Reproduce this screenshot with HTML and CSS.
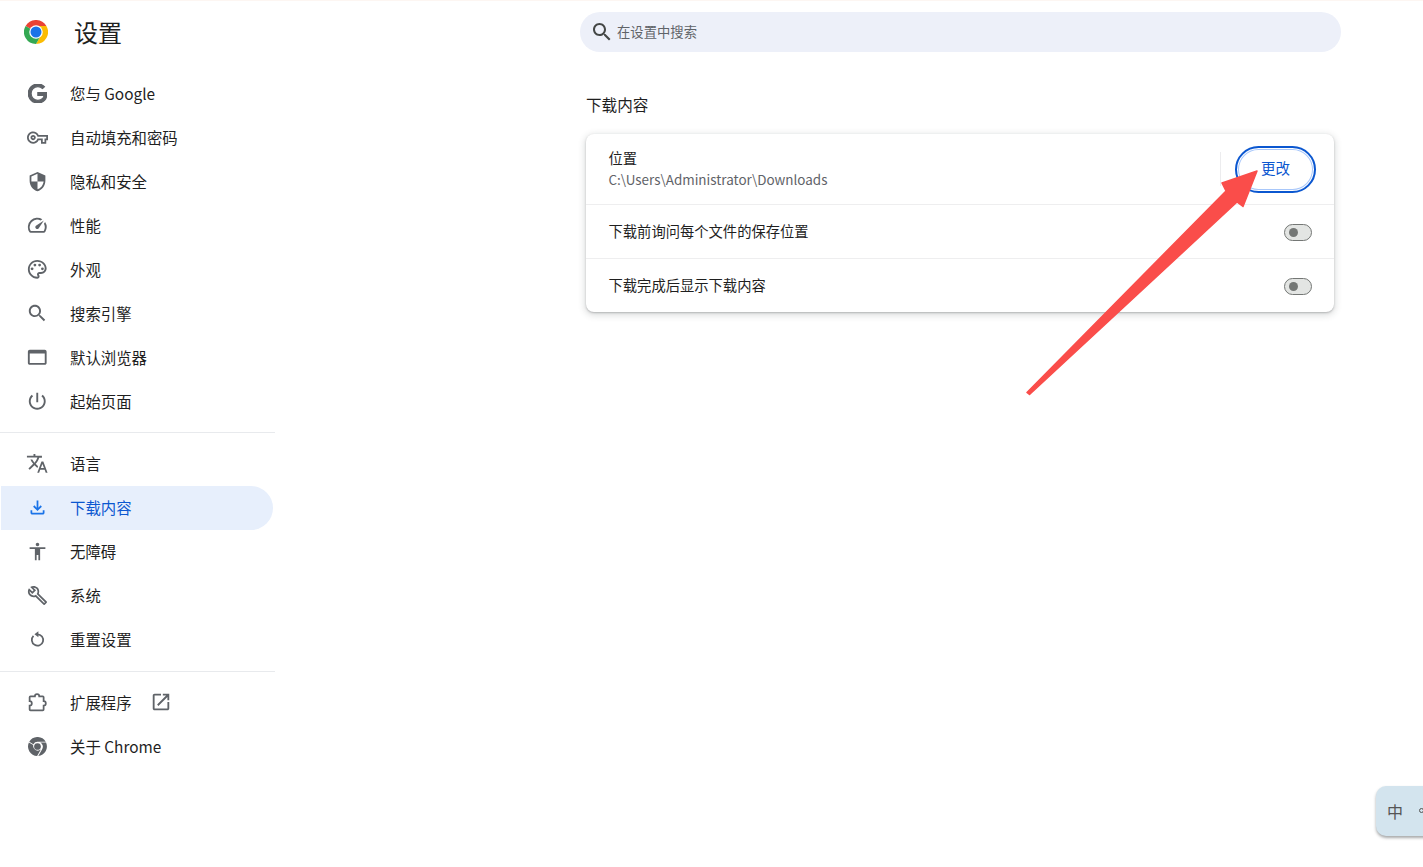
FILE: index.html
```html
<!DOCTYPE html>
<html lang="zh-CN">
<head>
<meta charset="utf-8">
<title>设置 - 下载内容</title>
<link rel="stylesheet" href="styles.css">
</head>
<body>
<div class="page">
  <aside class="sidebar">
    <header class="brand">
      <svg class="logo" viewBox="0 0 48 48">
        <path fill="#ea4335" d="M3.2 12A24 24 0 0 1 44.8 12H24A12 12 0 0 0 13.6 18Z"/>
        <path fill="#fbbc04" d="M44.8 12A24 24 0 0 1 24 48L34.4 30A12 12 0 0 0 24 12Z"/>
        <path fill="#34a853" d="M3.2 12A24 24 0 0 0 24 48L34.4 30A12 12 0 0 1 13.6 18Z"/>
        <circle cx="24" cy="24" r="13.500" fill="#fff"/>
        <circle cx="24" cy="24" r="11" fill="#1a73e8"/>
      </svg>
      <h1 class="brand-title">设置</h1>
    </header>
    <nav class="nav">
      <a class="nav-item"><span class="nav-icon"><svg class="icon icon-g icon-bold" viewBox="0 0 24 24"><path d="M12.48 10.92v3.28h7.84c-.24 1.84-.853 3.187-1.787 4.133-1.147 1.147-2.933 2.4-6.053 2.4-4.827 0-8.6-3.893-8.6-8.72s3.773-8.72 8.6-8.72c2.6 0 4.507 1.027 5.907 2.347l2.307-2.307C18.747 1.44 16.133 0 12.48 0 5.867 0 .307 5.387.307 12s5.56 12 12.173 12c3.573 0 6.267-1.173 8.373-3.36 2.16-2.16 2.84-5.213 2.84-7.667 0-.76-.053-1.467-.173-2.053H12.48z"/></svg></span>您与 Google</a>
      <a class="nav-item"><span class="nav-icon"><svg class="icon" viewBox="0 0 24 24"><path d="M22 19h-6v-4h-2.68c-1.14 2.42-3.6 4-6.32 4-3.86 0-7-3.14-7-7s3.14-7 7-7c2.72 0 5.17 1.58 6.32 4H24v6h-2v4zm-4-2h2v-4h2v-2H11.94l-.23-.67C11.01 8.34 9.11 7 7 7c-2.76 0-5 2.24-5 5s2.24 5 5 5c2.11 0 4.01-1.34 4.71-3.33l.23-.67H18v4zM7 15c-1.65 0-3-1.35-3-3s1.35-3 3-3 3 1.35 3 3-1.35 3-3 3zm0-4c-.55 0-1 .45-1 1s.45 1 1 1 1-.45 1-1-.45-1-1-1z"/></svg></span>自动填充和密码</a>
      <a class="nav-item"><span class="nav-icon"><svg class="icon" viewBox="0 0 24 24"><path d="M12 1L3 5v6c0 5.55 3.84 10.74 9 12 5.16-1.26 9-6.45 9-12V5l-9-4zm0 10.99h7c-.53 4.12-3.28 7.79-7 8.94V12H5V6.3l7-3.11v8.8z"/></svg></span>隐私和安全</a>
      <a class="nav-item"><span class="nav-icon"><svg class="icon icon-lg" viewBox="0 0 24 24"><path d="M20.38 8.57l-1.23 1.85a8 8 0 0 1-.22 7.58H5.07A8 8 0 0 1 15.58 6.85l1.85-1.23A10 10 0 0 0 3.35 19a2 2 0 0 0 1.72 1h13.85a2 2 0 0 0 1.74-1 10 10 0 0 0-.27-10.44zm-9.79 6.84a2 2 0 0 0 2.83 0l5.66-8.49-8.49 5.66a2 2 0 0 0 0 2.83z"/></svg></span>性能</a>
      <a class="nav-item"><span class="nav-icon"><svg class="icon icon-lg" viewBox="0 0 24 24"><path d="M12 22C6.49 22 2 17.51 2 12S6.49 2 12 2s10 4.04 10 9c0 3.31-2.69 6-6 6h-1.77c-.28 0-.5.22-.5.5 0 .12.05.23.13.33.41.47.64 1.06.64 1.67 0 1.38-1.12 2.5-2.5 2.5zm0-18c-4.41 0-8 3.59-8 8s3.59 8 8 8c.28 0 .5-.22.5-.5 0-.16-.08-.28-.14-.35-.41-.46-.63-1.05-.63-1.65 0-1.38 1.12-2.5 2.5-2.5H16c2.21 0 4-1.79 4-4 0-3.86-3.59-7-8-7z"/><circle cx="6.5" cy="11.5" r="1.5"/><circle cx="9.5" cy="7.5" r="1.5"/><circle cx="14.5" cy="7.5" r="1.5"/><circle cx="17.5" cy="11.5" r="1.5"/></svg></span>外观</a>
      <a class="nav-item"><span class="nav-icon"><svg class="icon icon-lg" viewBox="0 0 24 24"><path d="M15.5 14h-.79l-.28-.27C15.41 12.59 16 11.11 16 9.5 16 5.91 13.09 3 9.5 3S3 5.91 3 9.5 5.91 16 9.5 16c1.61 0 3.09-.59 4.23-1.57l.27.28v.79l5 4.99L20.49 19l-4.99-5zm-6 0C7.01 14 5 11.99 5 9.5S7.01 5 9.5 5 14 7.01 14 9.5 11.99 14 9.5 14z"/></svg></span>搜索引擎</a>
      <a class="nav-item"><span class="nav-icon"><svg class="icon icon-lg" viewBox="0 0 24 24"><path d="M20 4H4c-1.1 0-2 .9-2 2v12c0 1.1.9 2 2 2h16c1.1 0 2-.9 2-2V6c0-1.1-.9-2-2-2zm0 14H4V8h16v10z"/></svg></span>默认浏览器</a>
      <a class="nav-item"><span class="nav-icon"><svg class="icon icon-lg" viewBox="0 0 24 24"><path d="M13 3h-2v10h2V3zm4.83 2.17l-1.42 1.42C17.99 7.86 19 9.81 19 12c0 3.87-3.13 7-7 7s-7-3.13-7-7c0-2.19 1.01-4.14 2.58-5.42L6.17 5.17C4.23 6.82 3 9.26 3 12c0 4.97 4.03 9 9 9s9-4.03 9-9c0-2.74-1.23-5.18-3.17-6.83z"/></svg></span>起始页面</a>
    </nav>
    <hr class="divider">
    <nav class="nav">
      <a class="nav-item"><span class="nav-icon"><svg class="icon icon-lg" viewBox="0 0 24 24"><path d="M12.87 15.07l-2.54-2.51.03-.03c1.74-1.94 2.98-4.17 3.71-6.53H17V4h-7V2H8v2H1v1.99h11.17C11.5 7.92 10.44 9.75 9 11.35 8.07 10.32 7.3 9.19 6.69 8h-2c.73 1.63 1.73 3.17 2.98 4.56l-5.09 5.02L4 19l5-5 3.11 3.11.76-2.04zM18.5 10h-2L12 22h2l1.12-3h4.75L21 22h2l-4.5-12zm-2.62 7l1.62-4.33L19.12 17h-3.24z"/></svg></span>语言</a>
      <a class="nav-item nav-item-active"><span class="nav-icon"><svg class="icon" viewBox="0 0 24 24"><path d="M12 16l-5-5 1.4-1.45 2.6 2.6V4h2v8.15l2.6-2.6L17 11zm-6 4q-.825 0-1.413-.588Q4 18.825 4 18v-3h2v3h12v-3h2v3q0 .825-.587 1.412Q18.825 20 18 20z"/></svg></span>下载内容</a>
      <a class="nav-item"><span class="nav-icon"><svg class="icon" viewBox="0 0 24 24"><path d="M12 2c1.1 0 2 .9 2 2s-.9 2-2 2-2-.9-2-2 .9-2 2-2zm9 7h-6v13h-2v-6h-2v6H9V9H3V7h18v2z"/></svg></span>无障碍</a>
      <a class="nav-item"><span class="nav-icon"><svg class="icon" viewBox="0 0 24 24"><path d="M22.61 18.99l-9.08-9.08c.93-2.34.45-5.1-1.44-7C9.79.61 6.21.4 3.66 2.26L7.5 6.11 6.08 7.52 2.25 3.69C.39 6.23.6 9.82 2.9 12.11c1.86 1.86 4.57 2.35 6.89 1.48l9.11 9.11c.39.39 1.02.39 1.41 0l2.3-2.3c.4-.38.4-1.01 0-1.41zm-3 1.6l-9.46-9.46c-.61.45-1.29.72-2 .82-1.36.2-2.79-.21-3.83-1.25C3.37 9.76 2.93 8.5 3 7.26l3.09 3.09 4.24-4.24-3.09-3.09c1.24-.07 2.49.37 3.44 1.31 1.08 1.08 1.49 2.57 1.24 3.96-.12.71-.42 1.37-.88 1.96l9.45 9.45-.88.88z"/></svg></span>系统</a>
      <a class="nav-item"><span class="nav-icon"><svg class="icon" viewBox="0 0 24 24"><path class="icon-line" d="M12 6a6.500 6.500 0 1 1-4.600 1.900"/><path d="M13 2.500v7L8.500 6z"/></svg></span>重置设置</a>
    </nav>
    <hr class="divider divider-wide">
    <nav class="nav">
      <a class="nav-item"><span class="nav-icon"><svg class="icon" viewBox="0 0 24 24"><path class="icon-line" d="M4 5h5c0-1.400 1-2.500 2.500-2.500S14 3.600 14 5h4a1 1 0 0 1 1 1v4.500c1.400 0 2.500 1 2.500 2.500s-1.100 2.500-2.500 2.500V20a1 1 0 0 1-1 1H4a1 1 0 0 1-1-1v-4.500c1.500 0 2.500-1.100 2.500-2.500S4.500 10.500 3 10.500V6a1 1 0 0 1 1-1z"/></svg></span>扩展程序<svg class="icon icon-external" viewBox="0 0 24 24"><path d="M19 19H5V5h7V3H5c-1.11 0-2 .9-2 2v14c0 1.1.89 2 2 2h14c1.1 0 2-.9 2-2v-7h-2v7zM14 3v2h3.59l-9.83 9.83 1.41 1.41L19 6.41V10h2V3h-7z"/></svg></a>
      <a class="nav-item"><span class="nav-icon"><svg class="icon icon-g" viewBox="0 0 48 48"><path d="M3.2 12A24 24 0 0 1 44.8 12H24A12 12 0 0 0 13.6 18Z"/><path d="M45.6 14A24 24 0 0 1 26 47.9L35.4 31.5A12 12 0 0 0 31 14Z"/><path d="M2.2 14A24 24 0 0 0 23 48L32.4 31.8A12 12 0 0 1 13.2 20Z"/><circle cx="24" cy="24" r="8.5"/></svg></span>关于 Chrome</a>
    </nav>
  </aside>

  <main class="main">
    <div class="search">
      <svg class="icon search-icon" viewBox="0 0 24 24"><path d="M15.5 14h-.79l-.28-.27C15.41 12.59 16 11.11 16 9.5 16 5.91 13.09 3 9.5 3S3 5.91 3 9.5 5.91 16 9.5 16c1.61 0 3.09-.59 4.23-1.57l.27.28v.79l5 4.99L20.49 19l-4.99-5zm-6 0C7.01 14 5 11.99 5 9.5S7.01 5 9.5 5 14 7.01 14 9.5 11.99 14 9.5 14z"/></svg>
      <span class="search-text">在设置中搜索</span>
    </div>
    <section class="panel">
      <h2 class="panel-title">下载内容</h2>
      <div class="card">
        <div class="row row-location">
          <div class="row-text">
            <div class="row-label row-label-top">位置</div>
            <div class="row-sub">C:\Users\Administrator\Downloads</div>
          </div>
          <div class="row-sep"></div>
          <button class="btn" type="button">更改</button>
        </div>
        <div class="row">
          <div class="row-label row-grow">下载前询问每个文件的保存位置</div>
          <span class="toggle"></span>
        </div>
        <div class="row">
          <div class="row-label row-grow">下载完成后显示下载内容</div>
          <span class="toggle"></span>
        </div>
      </div>
    </section>
  </main>
</div>

<svg class="annotation" viewBox="0 0 1423 867" width="1423" height="867">
  <path class="annotation-arrow" d="M1027 392.5L1226 191L1222 183L1257 171L1243 206.500L1237 202L1029.500 394.500Z"/>
</svg>

<div class="ime"><span class="ime-main">中</span><span class="ime-ring"></span></div>
</body>
</html>
```
FILE: styles.css
```css
* { box-sizing: border-box; }

html, body {
  margin: 0;
  height: 100%;
  overflow: hidden;
  background: #fff;
}

body {
  font-family: "Noto Sans CJK SC", "Noto Sans", sans-serif;
  color: #1f1f1f;
  position: relative;
  border-top: 1px solid #fdf6f2;
}

.page {
  display: flex;
  align-items: flex-start;
}

.icon {
  display: block;
  flex: none;
  width: 21px;
  height: 21px;
  fill: currentColor;
}

.icon-g { width: 19px; height: 19px; }

.icon-lg { width: 22.5px; height: 22.5px; }

.icon-bold {
  stroke: currentColor;
  stroke-width: 1.6;
}

.icon-line {
  fill: none;
  stroke: currentColor;
  stroke-width: 2;
}

.sidebar {
  width: 275px;
  flex: none;
}

.brand {
  display: flex;
  align-items: center;
  height: 71px;
  padding: 0 0 10px 24px;
}

.logo {
  width: 24px;
  height: 24px;
  flex: none;
}

.brand-title {
  margin: 0 0 0 26px;
  font-size: 24px;
  font-weight: 400;
  line-height: 32px;
}

.nav {
  display: flex;
  flex-direction: column;
  margin-left: 1px;
  width: 272px;
}

.nav-item {
  display: flex;
  align-items: center;
  height: 44px;
  padding: 0 0 2px 26px;
  font-size: 15.4px;
  color: #1f1f1f;
  border-radius: 0 22px 22px 0;
}

.nav-item-active {
  background: #e7effc;
  color: #0b57d0;
}

.nav-icon {
  width: 20px;
  height: 21px;
  margin-right: 23px;
  display: flex;
  justify-content: center;
  align-items: center;
  color: #5f6368;
}

.nav-item-active .nav-icon { color: #1a73e8; }

.icon-external {
  width: 22px;
  height: 22px;
  margin-left: 18px;
  color: #5f6368;
}

.divider {
  border: 0;
  height: 1px;
  background: #e8eaed;
  margin: 8px 0 9px;
}

.divider-wide { margin-top: 9px; }

.main {
  margin-left: 305px;
  width: 761px;
  flex: none;
  padding-top: 11px;
}

.search {
  display: flex;
  align-items: center;
  height: 40px;
  padding: 0 0 0 10px;
  background: #edf0f9;
  border-radius: 20px;
}

.search-icon {
  width: 24px;
  height: 24px;
  color: #444746;
}

.search-text {
  margin: 0 0 2px 3px;
  font-size: 13.33px;
  color: #5f6368;
}

.panel {
  padding: 41px 7px 0 6px;
}

.panel-title {
  margin: 0;
  font-size: 15.6px;
  font-weight: 400;
  line-height: 22px;
}

.card {
  margin-top: 19px;
  background: #fff;
  border-radius: 8px;
  box-shadow: 0 1px 2px rgba(60, 64, 67, .3), 0 2px 6px 2px rgba(60, 64, 67, .15);
}

.row {
  display: flex;
  align-items: center;
  height: 54px;
  padding: 0 22px 2px 22.5px;
  border-top: 1px solid #eeeeef;
}

.row-location {
  height: 70px;
  padding: 0 18px 0 22.5px;
  border-top: 0;
}

.row-text {
  flex: 1;
  padding-bottom: 2px;
}

.row-grow { flex: 1; }

.row-label {
  font-size: 14.3px;
  line-height: 20px;
}

.row-label-top { margin-bottom: 1px; }

.row-sub {
  font-size: 13.45px;
  line-height: 20px;
  color: #5f6368;
}

.row-sep {
  width: 1px;
  height: 34px;
  background: #ececee;
  margin-right: 14px;
}

.btn {
  width: 81px;
  height: 47px;
  padding: 0 0 3px;
  font: inherit;
  font-size: 14.5px;
  color: #0b57d0;
  background: #fff;
  border: 2px solid #0b57d0;
  border-radius: 24px;
  box-shadow: inset 0 0 0 1px #fff, inset 0 0 0 2px #a8c7fa;
}

.toggle {
  position: relative;
  width: 28px;
  height: 17px;
  margin-top: 4px;
  background: #e3e5e3;
  border: 1px solid #747775;
  border-radius: 9px;
}

.toggle::after {
  content: "";
  position: absolute;
  left: 4px;
  top: 3px;
  width: 9px;
  height: 9px;
  border-radius: 50%;
  background: #747775;
}

.annotation {
  position: absolute;
  left: 0;
  top: -1px;
  pointer-events: none;
}

.annotation-arrow {
  fill: #fa4d4a;
  stroke: #fa4d4a;
  stroke-width: 1.5;
  stroke-linejoin: round;
}

.ime {
  position: absolute;
  left: 1376px;
  top: 785px;
  width: 60px;
  height: 50px;
  display: flex;
  align-items: center;
  background: #d3e4ee;
  border-radius: 10px 0 0 10px;
  box-shadow: 0 2px 3px rgba(60, 64, 67, .45);
  color: #555;
}

.ime-main {
  margin-left: 11px;
  font-size: 16px;
}

.ime-ring {
  width: 5px;
  height: 5px;
  margin: -2px 0 0 16px;
  border: 1.5px solid #555;
  border-radius: 50%;
}
```
